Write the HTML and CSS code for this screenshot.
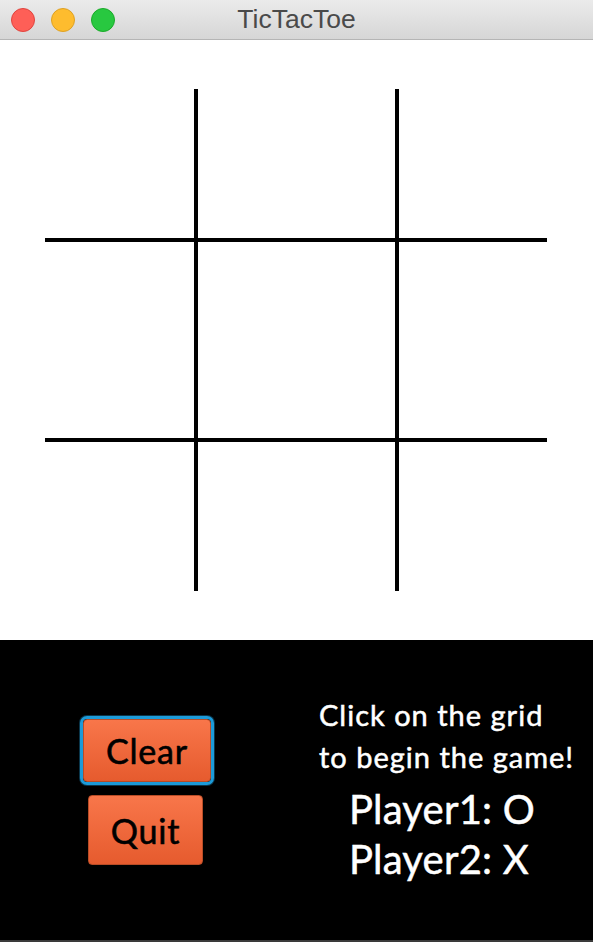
FILE: index.html
```html
<!DOCTYPE html>
<html>
<head>
<meta charset="utf-8">
<title>TicTacToe</title>
<link rel="stylesheet" href="styles.css">
</head>
<body>
<div class="window">
  <header class="titlebar">
    <div class="lights">
      <span class="light red"></span>
      <span class="light yellow"></span>
      <span class="light green"></span>
    </div>
    <div class="title">TicTacToe</div>
  </header>
  <main class="board-area">
    <svg class="board" width="502" height="502" viewBox="0 0 502 502">
      <line x1="151" y1="0" x2="151" y2="502" />
      <line x1="352" y1="0" x2="352" y2="502" />
      <line x1="0" y1="151" x2="502" y2="151" />
      <line x1="0" y1="351" x2="502" y2="351" />
    </svg>
  </main>
  <section class="panel">
    <div class="controls">
      <button class="btn btn-clear focused">Clear</button>
      <button class="btn btn-quit">Quit</button>
    </div>
    <div class="info">
      <p class="hint">Click on the grid<br>to begin the game!</p>
      <p class="players">Player1: O<br>Player2: X</p>
    </div>
  </section>
  <div class="bottom-edge"></div>
</div>
</body>
</html>
```
FILE: styles.css
```css
html, body {
  margin: 0;
  padding: 0;
  background: #000;
}
.window {
  width: 593px;
  height: 942px;
  display: flex;
  flex-direction: column;
  overflow: hidden;
}
.titlebar {
  height: 39px;
  flex: none;
  position: relative;
  background: linear-gradient(#ebebeb, #d6d6d6);
  border-bottom: 1px solid #b5b5b5;
  display: flex;
  align-items: center;
}
.lights {
  display: flex;
  gap: 16px;
  padding-left: 11px;
}
.light {
  width: 24px;
  height: 24px;
  border-radius: 50%;
  box-sizing: border-box;
}
.red { background: #fe5f57; border: 1px solid #e0443e; }
.yellow { background: #febc2e; border: 1px solid #dea123; }
.green { background: #28c840; border: 1px solid #1aab29; }
.title {
  position: absolute;
  left: 0;
  right: 0;
  top: 0;
  height: 39px;
  line-height: 38px;
  text-align: center;
  font-family: "Liberation Sans", Arial, sans-serif;
  font-size: 26.5px;
  color: #4a4a4a;
}
.board-area {
  height: 600px;
  flex: none;
  background: #fff;
  padding: 49px 0 0 45px;
  box-sizing: border-box;
}
.board {
  display: block;
}
.board line {
  stroke: #000;
  stroke-width: 4;
}
.panel {
  height: 300px;
  flex: none;
  background: #000;
  display: flex;
}
.controls {
  width: 294px;
  display: flex;
  flex-direction: column;
  align-items: center;
  padding-top: 76px;
  gap: 13px;
}
.btn {
  font-family: "Lato", "Noto Sans", sans-serif;
  font-size: 34px;
  letter-spacing: 0.8px;
  -webkit-text-stroke: 0.6px #000;
  color: #000;
  background: linear-gradient(#f8764a, #e65b2e);
  border: 1px solid #b84c26;
  border-radius: 4px;
  padding: 0;
  box-sizing: border-box;
}
.btn-clear {
  width: 128px;
  height: 63px;
  margin-top: 3px;
}
.btn-quit {
  width: 115px;
  height: 70px;
  margin-left: -3px;
}
.focused {
  outline: 3px solid #1c9ad8;
  outline-offset: 0;
  box-shadow: 0 0 0 4px rgba(28, 154, 216, 0.35);
}
.info {
  padding-left: 25px;
  padding-top: 54px;
  color: #fff;
  font-family: "Lato", "Noto Sans", sans-serif;
  -webkit-text-stroke: 0.5px #fff;
}
.hint {
  margin: 0;
  font-size: 29px;
  letter-spacing: 1px;
  line-height: 42px;
}
.players {
  margin: 6px 0 0 30px;
  font-size: 40px;
  letter-spacing: 0.2px;
  line-height: 50px;
}
.bottom-edge {
  height: 2px;
  flex: none;
  background: #3a3a3a;
}
```
